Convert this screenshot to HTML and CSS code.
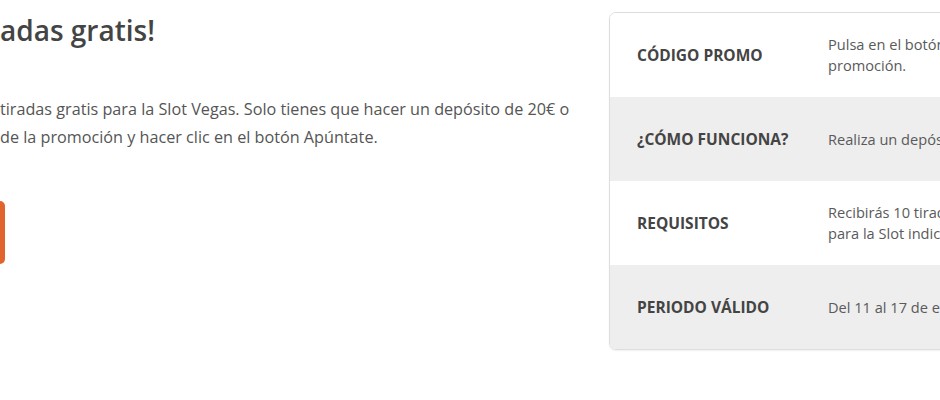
FILE: index.html
```html
<!DOCTYPE html>
<html lang="es">
<head>
<meta charset="utf-8">
<link rel="stylesheet" href="styles.css">
</head>
<body>
<div class="page">
  <section class="intro">
    <h1 class="intro-title">adas gratis!</h1>
    <p class="intro-text">tiradas gratis para la Slot Vegas. Solo tienes que hacer un depósito de 20€ o<br>de la promoción y hacer clic en el botón Apúntate.</p>
    <div class="cta"></div>
  </section>
  <aside class="promo">
    <div class="row">
      <div class="label">CÓDIGO PROMO</div>
      <div class="value">Pulsa en el botón Apúntate de la<br>promoción.</div>
    </div>
    <div class="row alt">
      <div class="label">¿CÓMO FUNCIONA?</div>
      <div class="value">Realiza un depósito de 20€ o más.</div>
    </div>
    <div class="row">
      <div class="label">REQUISITOS</div>
      <div class="value">Recibirás 10 tiradas gratis<br>para la Slot indicada.</div>
    </div>
    <div class="row alt">
      <div class="label">PERIODO VÁLIDO</div>
      <div class="value">Del 11 al 17 de enero.</div>
    </div>
  </aside>
</div>
</body>
</html>
```
FILE: styles.css
```css
html, body {
  margin: 0;
  padding: 0;
  background: #ffffff;
}
body {
  width: 940px;
  height: 400px;
  overflow: hidden;
  font-family: "Open Sans", "Noto Sans", sans-serif;
}
.page {
  display: flex;
  align-items: flex-start;
  width: 1300px;
}
.intro {
  width: 609px;
  flex-shrink: 0;
}
.intro-title {
  margin: 11px 0 0 0;
  font-size: 28px;
  line-height: 38px;
  font-weight: 600;
  color: #444444;
}
.intro-text {
  margin: 46px 0 0 0;
  font-size: 16.2px;
  line-height: 28px;
  color: #555555;
}
.cta {
  margin-top: 50px;
  width: 5px;
  height: 63px;
  background: #e0642b;
  border-radius: 0 6px 6px 0;
}
.promo {
  margin-top: 12px;
  width: 620px;
  flex-shrink: 0;
  border: 1px solid #dddddd;
  border-radius: 7px;
  overflow: hidden;
  box-shadow: 0 1px 2px rgba(0,0,0,0.06);
}
.row {
  display: flex;
  align-items: center;
  height: 84px;
  background: #ffffff;
}
.row.alt {
  background: #eeeeee;
}
.label {
  width: 191px;
  padding-left: 27px;
  flex-shrink: 0;
  font-size: 15.5px;
  font-weight: 700;
  color: #444444;
}
.value {
  font-size: 14.6px;
  line-height: 21px;
  color: #5a5a5a;
}
```
